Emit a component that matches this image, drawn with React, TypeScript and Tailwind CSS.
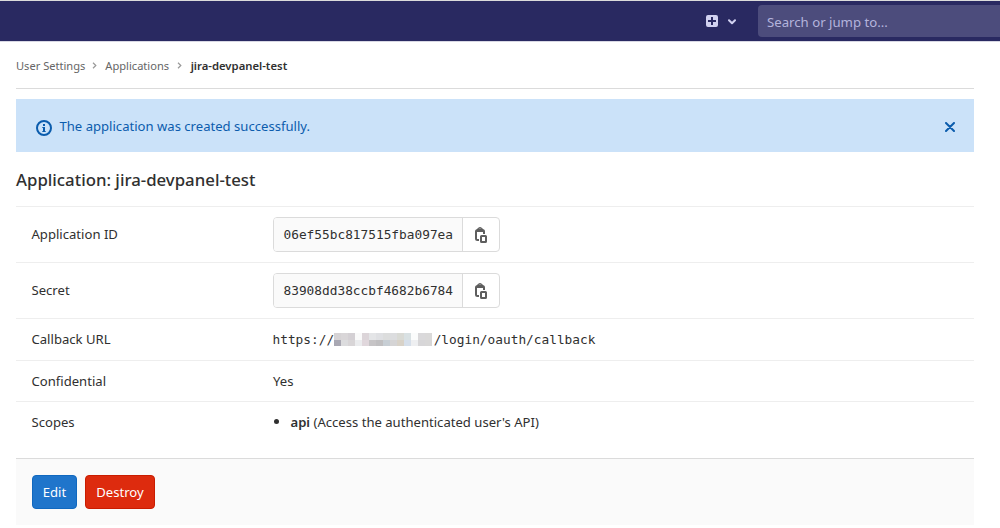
import { useState, type ReactNode } from 'react';

const HOST_TILES = [
  ['#d6d3d5', '#d9d6d8', '#d4d0d4', '#fafafa', '#dcd5d9', '#e4e5e7', '#dfe0e3', '#dcdddd', '#dcdddf', '#d9dad5', '#d9e1e3', '#fbfcfc', '#dad9db', '#dad9d9'],
  ['#a9a8b3', '#dcdcde', '#d8d5d7', '#ebecee', '#e0d7dc', '#c6c4c6', '#c0bfc1', '#c7ced4', '#d5d4d5', '#d8d2c8', '#d6dfea', '#eeeff1', '#d7d6d8', '#d8d7d7'],
];

function PlusSquareIcon() {
  return (
    <svg width="12" height="12" viewBox="0 0 12 12" aria-hidden="true">
      <path
        fill="#d1d1f0"
        fillRule="evenodd"
        d="M2 0h8a2 2 0 0 1 2 2v8a2 2 0 0 1-2 2H2a2 2 0 0 1-2-2V2a2 2 0 0 1 2-2Zm3 2v3H2v2h3v3h2V7h3V5H7V2H5Z"
      />
    </svg>
  );
}

function ChevronDownIcon() {
  return (
    <svg width="8" height="6" viewBox="0 0 8 6" fill="none" stroke="#d1d1f0" strokeWidth="2" strokeLinecap="round" strokeLinejoin="round" className="mt-px" aria-hidden="true">
      <path d="M1 1.2 4 4.2l3-3" />
    </svg>
  );
}

function ChevronRightIcon() {
  return (
    <svg width="5" height="7" viewBox="0 0 5 7" fill="none" stroke="#999" strokeWidth="1.2" aria-hidden="true">
      <path d="m1 .8 2.8 2.7L1 6.2" />
    </svg>
  );
}

function InfoIcon() {
  return (
    <svg width="16" height="16" viewBox="0 0 16 16" fill="#0b5cad" aria-hidden="true">
      <path
        fillRule="evenodd"
        d="M8 16A8 8 0 1 0 8 0a8 8 0 0 0 0 16Zm0-2A6 6 0 1 1 8 2a6 6 0 0 1 0 12Z"
      />
      <path d="M7 4h2v2H7zM6.3 7H9v4h.7v1H6.3v-1H7V8h-.7z" />
    </svg>
  );
}

function CloseIcon() {
  return (
    <svg width="10" height="10" viewBox="0 0 10 10" fill="none" stroke="#0b5cad" strokeWidth="2" strokeLinecap="round" aria-hidden="true">
      <path d="m1 1 8 8M9 1 1 9" />
    </svg>
  );
}

function CopyIcon() {
  return (
    <svg width="12" height="16" viewBox="0 0 12 16" fill="none" stroke="#5e5e5e" aria-hidden="true">
      <path strokeWidth="2" d="M4 13H2.5A1.5 1.5 0 0 1 1 11.5V4.5A1.5 1.5 0 0 1 2.5 3H7.5A1.5 1.5 0 0 1 9 4.5V7" />
      <path fill="#5e5e5e" stroke="none" fillRule="evenodd" d="M3 1.5a2 1.5 0 0 1 4 0h1V5H2V1.5h1ZM4.500 1.500V3h1V1.500h-1Z" />
      <rect x="6" y="9" width="5" height="6" rx=".5" strokeWidth="2" />
    </svg>
  );
}

function CopyField({ value }: { value: string }) {
  return (
    <div className="flex h-[35px] w-[227px] rounded-[4px] border border-[#dbdbdb]">
      <div className="flex w-[189px] items-center whitespace-nowrap rounded-l-[3px] border-r border-[#dbdbdb] bg-[#fafafa] pl-[9.5px] font-['DejaVu_Sans_Mono',monospace] text-[12.8px]">
        {value}
      </div>
      <button
        type="button"
        aria-label="Copy"
        className="flex flex-1 items-center justify-center"
        onClick={() => navigator.clipboard?.writeText(value)}
      >
        <CopyIcon />
      </button>
    </div>
  );
}

function MaskedHost() {
  return (
    <span className="mr-[1.5px] inline-block align-[-2px]">
      {HOST_TILES.map((row, i) => (
        <span key={i} className="flex">
          {row.map((color, j) => (
            <span key={j} className="h-[6.5px] w-[7px]" style={{ backgroundColor: color }} />
          ))}
        </span>
      ))}
    </span>
  );
}

function Row({ label, height, children }: { label: string; height: string; children: ReactNode }) {
  return (
    <div className={`flex items-center border-t border-[#eee] pl-[15.5px] ${height}`}>
      <div className="w-[241.5px] shrink-0 pb-px">{label}</div>
      <div>{children}</div>
    </div>
  );
}

export default function App() {
  const [showAlert, setShowAlert] = useState(true);

  return (
    <div className="h-[528px] w-[1000px] overflow-hidden bg-white font-['Noto_Sans',sans-serif] text-[13.1px] leading-5 text-[#303030]">
      <header className="flex h-[42px] items-center justify-end border-y border-t-[#dbdbdb] border-b-[#d8d8e4] bg-[#292961]">
        <button type="button" aria-label="New" className="mr-[22px] flex items-center gap-2.5">
          <PlusSquareIcon />
          <ChevronDownIcon />
        </button>
        <input
          type="text"
          placeholder="Search or jump to..."
          className="h-8 w-[242px] rounded-l-[4px] bg-[#4c4c7c] px-[9px] pt-0.5 text-[13.2px] text-white placeholder:text-[#b4b4dc]"
        />
      </header>

      <main className="ml-4 w-[958px]">
        <nav className="flex h-[47px] items-center border-b border-[#dbdbdb] text-[11.1px] text-[#666]">
          <a href="#" className="mr-[7px] pt-px">User Settings</a>
          <ChevronRightIcon />
          <a href="#" className="mr-[7.5px] ml-[8px] pt-px">Applications</a>
          <ChevronRightIcon />
          <a href="#" className="ml-[9px] pt-px text-[11.3px] font-semibold text-[#303030]">jira-devpanel-test</a>
        </nav>

        {showAlert && (
          <div className="mt-2.5 flex h-[53px] items-center bg-[#cbe2f9] pr-[19px] pl-5 text-[#0b5cad]">
            <span className="mt-[5px]">
              <InfoIcon />
            </span>
            <span className="ml-[7.5px] flex-1">The application was created successfully.</span>
            <button type="button" aria-label="Dismiss" className="mt-[3px]" onClick={() => setShowAlert(false)}>
              <CloseIcon />
            </button>
          </div>
        )}

        <h1 className="flex h-[54px] items-center pt-0.5 text-[16.8px] font-medium">Application: jira-devpanel-test</h1>

        <Row label="Application ID" height="h-14">
          <CopyField value="06ef55bc817515fba097ea" />
        </Row>
        <Row label="Secret" height="h-14">
          <CopyField value="83908dd38ccbf4682b6784" />
        </Row>
        <Row label="Callback URL" height="h-[42px]">
          <span className="-ml-[0.5px] whitespace-nowrap font-['DejaVu_Sans_Mono',monospace] text-[12.8px]">
            https://
            <MaskedHost />
            /login/oauth/callback
          </span>
        </Row>
        <Row label="Confidential" height="h-[41px]">Yes</Row>
        <Row label="Scopes" height="h-[42px]">
          <div className="flex items-center pb-0.5">
            <span className="mr-[11.5px] ml-px size-[5px] rounded-full bg-[#303030]" />
            <span>
              <strong className="font-semibold">api</strong> (Access the authenticated user's API)
            </span>
          </div>
        </Row>

        <div className="mt-[15px] flex h-[67px] items-center gap-2 border-t border-[#dbdbdb] bg-[#fafafa] pl-4 text-white">
          <button type="button" className="h-[34px] w-[45px] rounded-[4px] border border-[#1068bf] bg-[#1f75cb]">Edit</button>
          <button type="button" className="h-[34px] w-[70px] rounded-[4px] border border-[#c91c00] bg-[#dd2b0e]">Destroy</button>
        </div>
      </main>
    </div>
  );
}
